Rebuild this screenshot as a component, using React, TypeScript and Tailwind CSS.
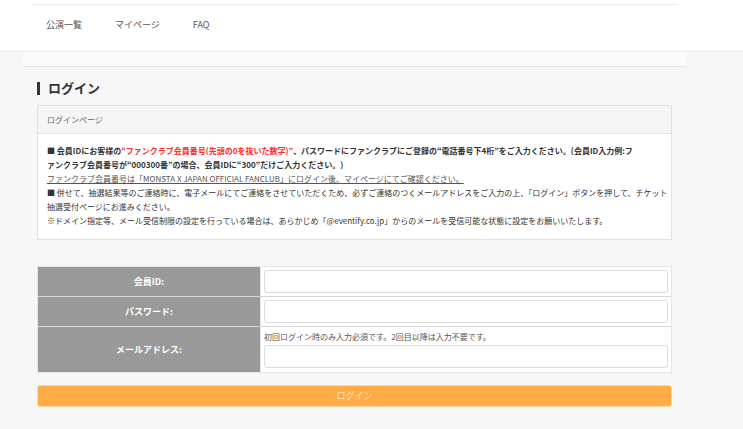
const font = { fontFamily: '"Noto Sans CJK JP", "Noto Sans", sans-serif' };

function Field({ label, note, tall }: { label: string; note?: string; tall?: boolean }) {
  return (
    <div className={`flex ${tall ? 'h-[45px]' : 'h-[30px]'} border-b border-[#d6d6d6] last:border-b-0`}>
      <div className="flex w-[222px] shrink-0 items-center justify-center bg-[#999999] text-[9px] font-bold text-white">
        {label}
      </div>
      <div className="flex flex-1 flex-col justify-center border-l border-[#e6e6e6] bg-white px-[3px]">
        {note && <p className="mb-[2px] text-[8px] leading-[12px] text-[#555]">{note}</p>}
        <input type="text" className="h-[23px] w-full rounded-[3px] border border-[#dcdcdc] bg-white outline-none" />
      </div>
    </div>
  );
}

export default function App() {
  return (
    <div className="min-h-screen bg-[#f7f7f7] text-[#333]" style={font}>
      <header className="h-[52px] border-b border-[#e8e8e8] bg-white pt-[4px]">
        <nav className="ml-[33px] flex h-[41px] w-[643px] items-center gap-[33px] border-t border-[#ebebeb] pl-[13px] text-[9px] text-[#555]">
          <span>公演一覧</span>
          <span>マイページ</span>
          <span>FAQ</span>
        </nav>
      </header>
      <div className="ml-[23px] h-[15px] w-[663px] border-b border-[#e3e3e3] bg-[#fbfbfb]" />

      <main className="ml-[37px] w-[635px] pb-6">
        <h2 className="mt-[13px] flex items-center gap-[8px] text-[13px] font-bold leading-[16px] text-[#333]">
          <span className="h-[13px] w-[3px] bg-[#333]" />
          ログイン
        </h2>

        <section className="mt-[9px] border border-[#e2e2e2] bg-white">
          <div className="flex h-[28px] items-center border-b border-[#e6e6e6] bg-[#f5f5f5] pl-[9px] text-[8px] text-[#666]">
            ログインページ
          </div>
          <div className="whitespace-nowrap px-[9px] pb-[11px] pt-[10px] text-[8px] leading-[14px] text-[#333]">
            <p className="font-bold">
              ■ 会員IDにお客様の<span className="text-[#ff2a2a]">“ファンクラブ会員番号(先頭の0を抜いた数字)”</span>、パスワードにファンクラブにご登録の“電話番号下4桁”をご入力ください。(会員ID入力例:フ
              <br />
              ァンクラブ会員番号が“000300番”の場合、会員IDに“300”だけご入力ください。)
            </p>
            <p className="text-[#555] underline">
              ファンクラブ会員番号は「MONSTA X JAPAN OFFICIAL FANCLUB」にログイン後、マイページにてご確認ください。
            </p>
            <p>
              ■ 併せて、抽選結果等のご連絡時に、電子メールにてご連絡をさせていただくため、必ずご連絡のつくメールアドレスをご入力の上、「ログイン」ボタンを押して、チケット
              <br />
              抽選受付ページにお進みください。
            </p>
            <p>
              ※ドメイン指定等、メール受信制限の設定を行っている場合は、あらかじめ「@eventify.co.jp」からのメールを受信可能な状態に設定をお願いいたします。
            </p>
          </div>
        </section>

        <div className="mt-[26px] border border-[#e6e6e6]">
          <Field label="会員ID:" />
          <Field label="パスワード:" />
          <Field label="メールアドレス:" note="初回ログイン時のみ入力必須です。2回目以降は入力不要です。" tall />
        </div>

        <button className="mt-[12px] h-[22px] w-full rounded-[3px] border border-[#ffd9a8] bg-[#ffab46] text-[9px] text-[#ffe3c2]">
          ログイン
        </button>
      </main>
    </div>
  );
}
